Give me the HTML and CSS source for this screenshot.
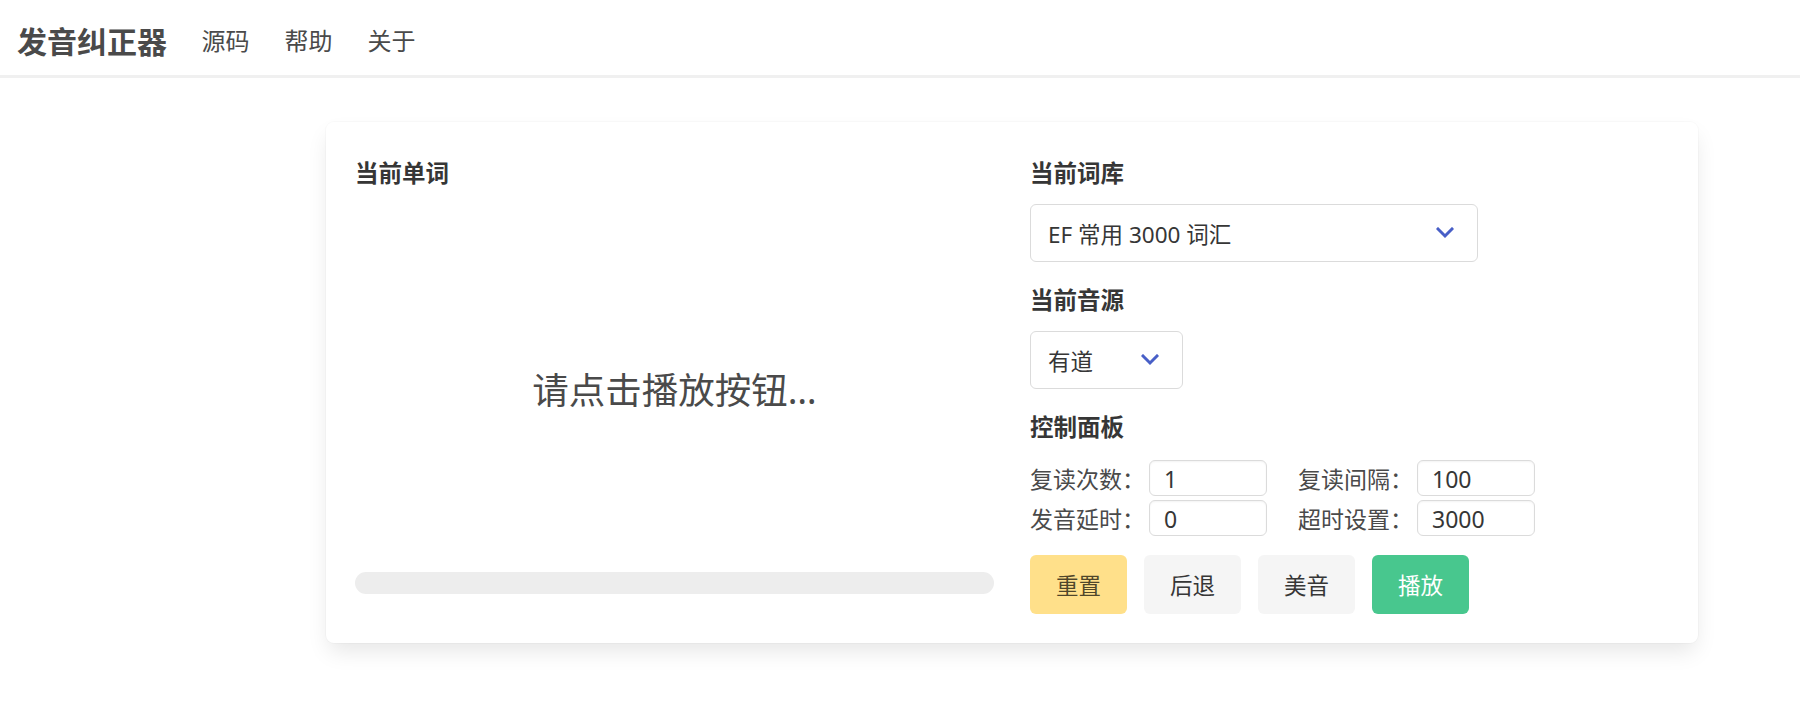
FILE: index.html
```html
<!DOCTYPE html>
<html lang="zh-CN">
<head>
    <meta charset="UTF-8">
    <meta name="viewport" content="width=device-width, initial-scale=1.0">
    <title>发音纠正器</title>
    <link rel="stylesheet" href="styles.css">
</head>
<body>

    <!-- Top navigation -->
    <nav class="navbar">
        <a class="brand" href="#">发音纠正器</a>
        <a class="nav-item" href="#">源码</a>
        <a class="nav-item" href="#">帮助</a>
        <a class="nav-item" href="#">关于</a>
    </nav>

    <div class="main">
        <div class="box">

            <!-- Left: current word -->
            <div class="col col-word">
                <h3 class="label">当前单词</h3>
                <div class="word-area">
                    <p class="word-text">请点击播放按钮…</p>
                </div>
                <div class="progress"></div>
            </div>

            <!-- Right: settings -->
            <div class="col col-settings">
                <h3 class="label">当前词库</h3>
                <div class="select select-wide">
                    <span>EF 常用 3000 词汇</span>
                    <svg class="arrow" width="18" height="12" viewBox="0 0 18 12">
                        <path d="M2 2 L9 9 L16 2" fill="none" stroke="#485fc7" stroke-width="3" stroke-linecap="square"/>
                    </svg>
                </div>

                <h3 class="label label-gap">当前音源</h3>
                <div class="select select-small">
                    <span>有道</span>
                    <svg class="arrow" width="18" height="12" viewBox="0 0 18 12">
                        <path d="M2 2 L9 9 L16 2" fill="none" stroke="#485fc7" stroke-width="3" stroke-linecap="square"/>
                    </svg>
                </div>

                <h3 class="label label-gap">控制面板</h3>
                <div class="fields">
                    <div class="field">
                        <span class="field-label">复读次数：</span>
                        <input class="input" type="text" value="1">
                    </div>
                    <div class="field">
                        <span class="field-label">复读间隔：</span>
                        <input class="input" type="text" value="100">
                    </div>
                    <div class="field">
                        <span class="field-label">发音延时：</span>
                        <input class="input" type="text" value="0">
                    </div>
                    <div class="field">
                        <span class="field-label">超时设置：</span>
                        <input class="input" type="text" value="3000">
                    </div>
                </div>

                <div class="buttons">
                    <button class="button is-warning">重置</button>
                    <button class="button is-light">后退</button>
                    <button class="button is-light">美音</button>
                    <button class="button is-success">播放</button>
                </div>
            </div>

        </div>
    </div>

</body>
</html>
```

FILE: styles.css
```css
/* Base */
body {
    margin: 0;
    background: #fff;
    color: #4a4a4a;
    font-family: "Noto Sans", "Noto Sans CJK SC", sans-serif;
    font-size: 22px;
}

a {
    text-decoration: none;
}

/* Navbar */
.navbar {
    display: flex;
    align-items: center;
    height: 75px;
    background: #fff;
    box-shadow: 0 3px 0 0 #f0f0f0;
}

.brand {
    padding: 4px 17px 0;
    font-size: 30px;
    font-weight: bold;
    color: #4a4a4a;
}

.nav-item {
    padding: 4px 17.5px 0;
    font-size: 24px;
    color: #4a4a4a;
}

/* Main card */
.main {
    padding: 47px 102px 40px 326px;
}

.box {
    display: flex;
    gap: 36px;
    padding: 35px 29px 29px;
    background: #fff;
    border-radius: 8px;
    box-shadow: 0 11px 22px -3px rgba(10, 10, 10, 0.1), 0 0 0 1px rgba(10, 10, 10, 0.02);
}

.col {
    flex: 1;
    display: flex;
    flex-direction: column;
}

.label {
    margin: 0;
    font-size: 23.5px;
    line-height: 32px;
    font-weight: bold;
    color: #363636;
}

.label-gap {
    margin-top: 22px;
}

/* Word panel */
.word-area {
    flex: 1;
    display: flex;
    align-items: center;
    justify-content: center;
    padding-top: 16px;
}

.word-text {
    margin: 0;
    font-size: 36.5px;
    color: #4a4a4a;
}

.progress {
    height: 22px;
    margin-bottom: 20px;
    border-radius: 11px;
    background: #ededed;
}

/* Selects */
.select {
    display: flex;
    align-items: center;
    justify-content: space-between;
    box-sizing: border-box;
    height: 58px;
    margin-top: 15px;
    padding: 0 23px 0 17px;
    border: 1px solid #dbdbdb;
    border-radius: 6px;
    color: #363636;
    font-size: 22.5px;
}

.select-wide {
    width: 448px;
}

.select-small {
    width: 153px;
}

/* Control fields */
.fields {
    display: grid;
    grid-template-columns: 237px 237px;
    column-gap: 31px;
    row-gap: 4px;
    margin-top: 17px;
}

.field {
    display: flex;
    align-items: center;
}

.field-label {
    width: 119px;
    font-size: 23px;
    color: #4a4a4a;
}

.input {
    box-sizing: border-box;
    width: 118px;
    height: 36px;
    padding: 2px 14px 0;
    border: 1px solid #dbdbdb;
    border-radius: 6px;
    box-shadow: inset 0 1px 2px rgba(10, 10, 10, 0.05);
    font-family: "Noto Sans", "Noto Sans CJK SC", sans-serif;
    font-size: 23px;
    color: #363636;
}

/* Buttons */
.buttons {
    display: flex;
    gap: 17px;
    margin-top: 19px;
}

.button {
    width: 97px;
    height: 59px;
    border: none;
    border-radius: 6px;
    font-family: "Noto Sans", "Noto Sans CJK SC", sans-serif;
    font-size: 22.5px;
    cursor: pointer;
}

.is-warning {
    background: #ffe08a;
    color: rgba(0, 0, 0, 0.7);
}

.is-light {
    background: #f5f5f5;
    color: #363636;
}

.is-success {
    background: #48c78e;
    color: #fff;
}
```
